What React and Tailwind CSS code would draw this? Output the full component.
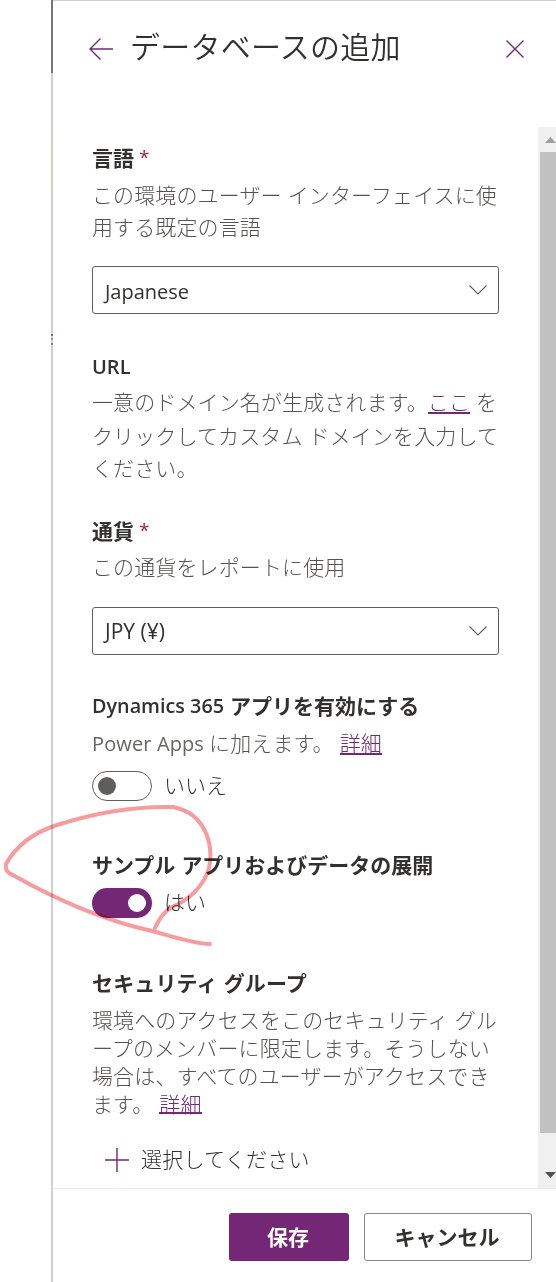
import React from "react";

const Latin = ({ className = "font-normal", children }) => (
  <span className={`inline-block font-['Open_Sans','Noto_Sans_CJK_JP',sans-serif] ${className}`}>{children}</span>
);

const Gap = () => <span className="inline-block w-[6px]" />;

const Label = ({ required, children, className = "" }) => (
  <div className={`flex h-8 items-center whitespace-pre text-[21px] leading-8 font-bold text-[#323130] ${className}`}>
    {children}
    {required && <span className="ml-[5px] font-['Open_Sans',sans-serif] text-[19px] font-normal text-[#a4262c]">*</span>}
  </div>
);

const Line = ({ className = "h-8 leading-[30px]", children }) => (
  <div className={`tracking-[0.12px] whitespace-pre ${className}`}>{children}</div>
);

const Link = ({ children }) => (
  <a className="relative inline-block text-[#742774] after:absolute after:inset-x-0 after:bottom-[2px] after:h-[2px] after:bg-[#742774]">
    {children}
  </a>
);

const Select = ({ children, className = "" }) => (
  <div className={`flex h-12 w-[407px] items-center justify-between rounded-[3px] border border-[#605e5c] pr-[11px] pl-3 text-[20px] text-[#323130] ${className}`}>
    {children}
    <svg width="18" height="10" viewBox="0 0 18 10" className="-mt-[1px] fill-none stroke-[#605e5c]" strokeWidth="1.1">
      <path d="M.5.5 9 8.9 17.5.5" />
    </svg>
  </div>
);

const Toggle = ({ on, children, className = "" }) => (
  <div className={`flex h-[30px] items-center gap-3 text-[21px] text-[#323130] ${className}`}>
    {on ? (
      <div className="flex h-[30px] w-[60px] items-center justify-end rounded-full bg-[#742774] px-[6px]">
        <div className="size-[18px] rounded-full bg-white" />
      </div>
    ) : (
      <div className="flex h-[30px] w-[60px] items-center rounded-full border border-[#605e5c] px-[5px]">
        <div className="size-[18px] rounded-full bg-[#605e5c]" />
      </div>
    )}
    <span className="pb-[3px] leading-[27px]">{children}</span>
  </div>
);

export default function App() {
  return (
    <div className="relative flex h-[1282px] w-[556px] overflow-hidden bg-white font-['Noto_Sans_CJK_JP',sans-serif] font-light">
      <div className="w-[51px] shrink-0" />
      <div className="flex w-[2px] shrink-0 flex-col bg-[#d0d0d0]">
        <div className="h-[73px] bg-[#767676]" />
        <div className="mt-[66px] h-[53px] bg-[#d6d2b8]" />
        <div className="mt-[142px] h-[2px] bg-[#587890]" />
        <div className="mt-[2px] h-[2px] bg-[#7ba0b8]" />
        <div className="mt-[3px] h-[2px] bg-[#6589a3]" />
      </div>
      <div className="flex min-w-0 flex-1 flex-col border-t border-[#d0d0d0]">
        <header className="flex h-[126px] shrink-0 items-start pl-9">
          <svg width="24" height="22" viewBox="0 0 24 22" className="mt-[37px] fill-none stroke-[#742774]" strokeWidth="1.4">
            <path d="M24 11H1M11.5.5 1 11 11.5 21.5" />
          </svg>
          <h1 className="ml-[17px] w-[271px] pt-[22px] text-[30px] leading-[44px] font-[350] tracking-[0.25px] whitespace-nowrap text-[#323130]">データベースの追加</h1>
          <svg width="18" height="18" viewBox="0 0 18 18" className="mt-[39px] ml-[105px] fill-none stroke-[#742774]" strokeWidth="1.3">
            <path d="m.5.5 17 17M17.5.5.5 17.5" />
          </svg>
        </header>
        <div className="flex h-[1061px] shrink-0">
          <main className="w-[485px] pl-[39px] text-[21px] text-[#555351]">
            <Label required className="mt-[14px]">言語</Label>
            <div className="mt-[6px]">
              <Line>この環境のユーザー<Gap />インターフェイスに使</Line>
              <Line>用する既定の言語</Line>
            </div>
            <Select className="mt-[23px]"><Latin className="pt-[3px] font-normal">Japanese</Latin></Select>
            <Label className="mt-[36px]"><Latin className="pt-[1px] text-[20px] font-semibold">URL</Latin></Label>
            <div className="mt-[4px]">
              <Line className="h-[34px] leading-[30px]">一意のドメイン名が生成されます。<Link>ここ</Link><Gap />を</Line>
              <Line className="h-8 leading-[30px]">クリックしてカスタム<Gap />ドメインを入力して</Line>
              <Line className="h-8 leading-[30px]">ください。</Line>
            </div>
            <Label required className="mt-[30px]">通貨</Label>
            <Line className="mt-[5px] h-8 leading-[30px]">この通貨をレポートに使用</Line>
            <Select className="mt-[24px]"><Latin className="pt-[1px] text-[21px] font-normal">JPY (¥)</Latin></Select>
            <Label className="mt-[34px]"><Latin className="mr-[6px] pt-[1px] text-[19.8px] font-semibold">Dynamics 365</Latin>アプリを有効にする</Label>
            <Line className="mt-[6px] h-8 leading-[30px]"><Latin className="mr-[5px] text-[20px] font-normal text-[#686664]">Power Apps</Latin>に加えます。<Gap /><Link>詳細</Link></Line>
            <Toggle className="mt-[12px]">いいえ</Toggle>
            <Label className="mt-[47px]">サンプル<Gap />アプリおよびデータの展開</Label>
            <Toggle on className="mt-[8px]">はい</Toggle>
            <Label className="mt-[48px] tracking-[0.15px]">セキュリティ<Gap />グループ</Label>
            <div className="mt-[8px]">
              <Line className="h-7 leading-[26px]">環境へのアクセスをこのセキュリティ<Gap />グル</Line>
              <Line className="h-7 leading-[26px]">ープのメンバーに限定します。そうしない</Line>
              <Line className="h-7 leading-[26px]">場合は、すべてのユーザーがアクセスでき</Line>
              <Line className="h-7 leading-[26px]">ます。<Gap /><Link>詳細</Link></Line>
            </div>
            <div className="mt-[26px] flex h-8 items-center pl-[13px] text-[#323130]">
              <svg width="24" height="24" viewBox="0 0 24 24" className="stroke-[#742774]" strokeWidth="1.4">
                <path d="M12 0v24M0 12h24" />
              </svg>
              <span className="ml-3 pb-[3px] leading-[29px] tracking-[0.25px]">選択してください</span>
            </div>
          </main>
          <div className="flex w-[18px] flex-col bg-[#f0f0f0] pl-[2px]">
            <div className="flex h-[25px] shrink-0 items-start pt-[10px] pl-[5px]">
              <svg width="11" height="6" viewBox="0 0 11 6" className="fill-[#a0a0a0]"><path d="M0 6 5.5 0 11 6z" /></svg>
            </div>
            <div className="h-[981px] shrink-0 bg-[#c1c1c1]" />
            <div className="pt-[39px] pl-[5px]">
              <svg width="11" height="6" viewBox="0 0 11 6" className="fill-[#505050]"><path d="M0 0h11L5.5 6z" /></svg>
            </div>
          </div>
        </div>
        <footer className="flex flex-1 items-start justify-end gap-[15px] border-t border-[#eaeaea] pt-6 pr-6 text-[21px] font-bold">
          <button className="h-12 w-[120px] rounded-[3px] bg-[#742774] pr-[2px] text-white">保存</button>
          <button className="h-12 w-[168px] rounded-[3px] border border-[#8a8886] pr-[2px] text-[#323130]">キャンセル</button>
        </footer>
      </div>
      <svg width="220" height="160" viewBox="0 0 220 160" className="absolute top-[795px] left-0 fill-none stroke-[#ed2024] opacity-45 mix-blend-multiply" strokeWidth="4" strokeLinecap="round" strokeLinejoin="round">
        <path d="M155 133C159 124 165 116 172 112C189 105 204 91 209 73C214 49 205 18 173 12C128 11 91 19 57 30C32 38 15 53 6 69C5 74 7 77 11 79C53 103 102 125 152 136C171 141 194 149 210 149" />
      </svg>
    </div>
  );
}
